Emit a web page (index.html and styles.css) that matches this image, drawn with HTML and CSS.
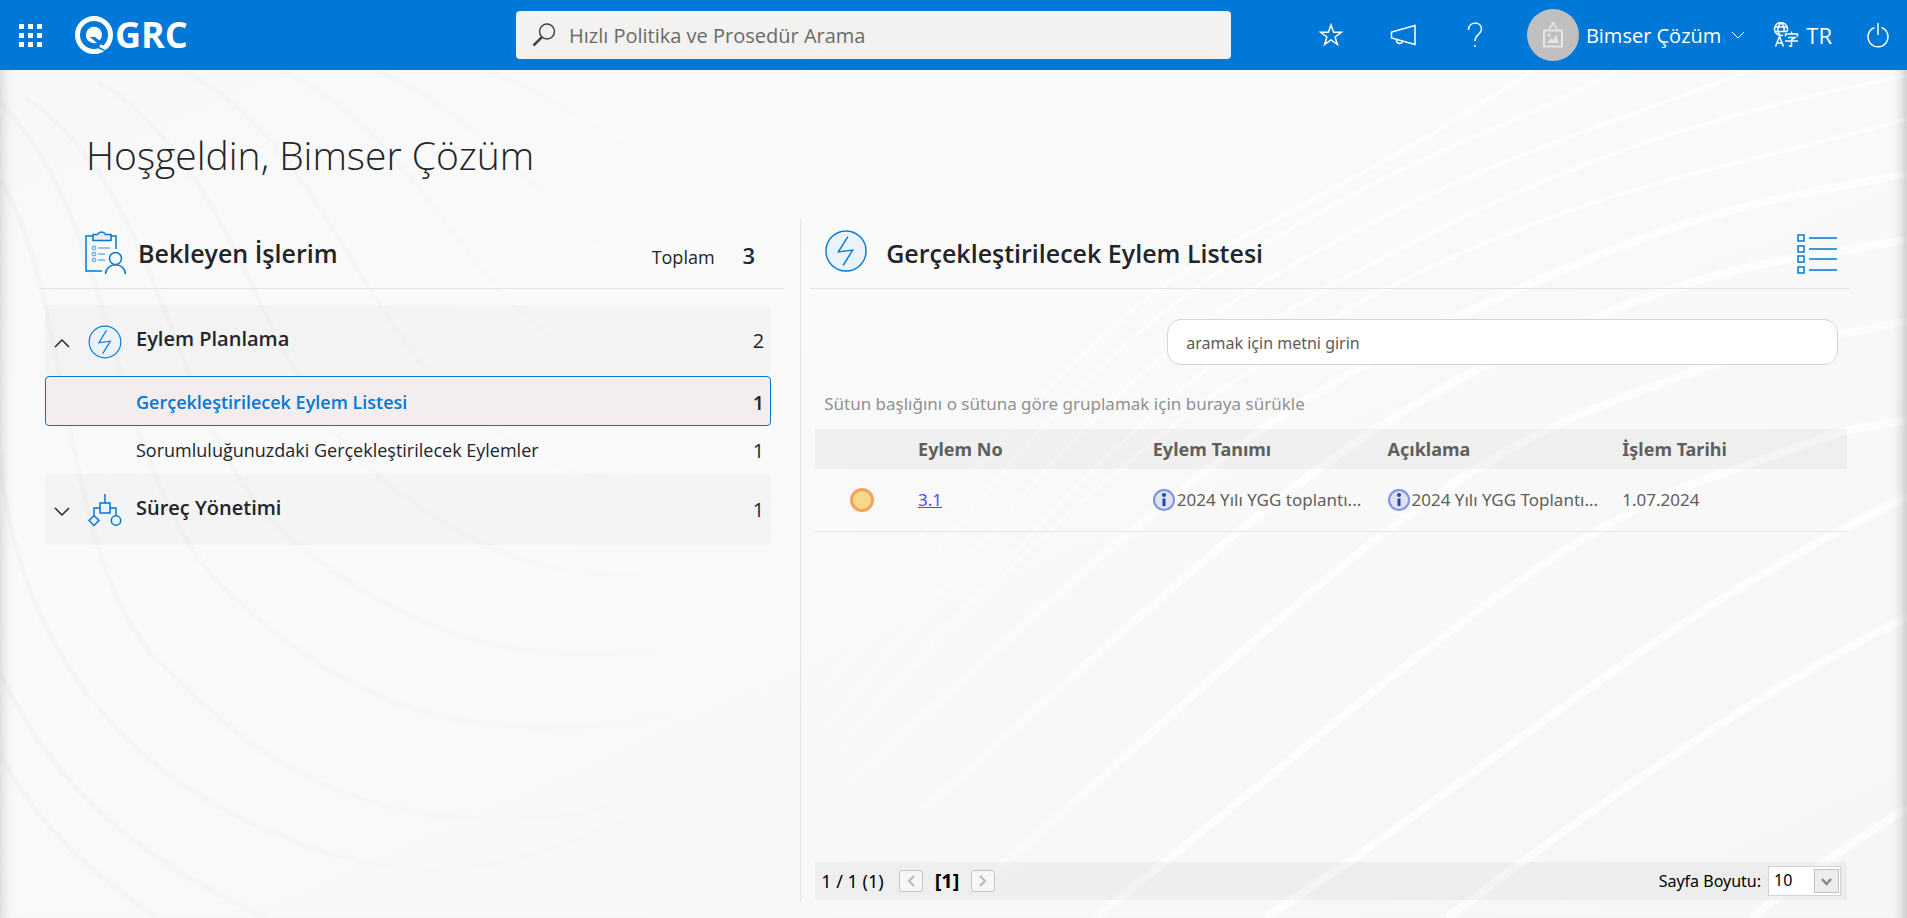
FILE: index.html
```html
<!DOCTYPE html>
<html lang="tr">
<head>
<meta charset="utf-8">
<title>QGRC</title>
<link rel="stylesheet" href="styles.css">
</head>
<body>
<svg class="backdrop" viewBox="0 0 1568 1550" preserveAspectRatio="none" aria-hidden="true">
  <defs>
    <linearGradient id="shade" x1="0" y1="0" x2="1" y2="1">
      <stop offset="0" stop-color="#f8f8f8"/><stop offset=".3" stop-color="#fafafa"/><stop offset="1" stop-color="#f6f6f6"/>
    </linearGradient>
    <linearGradient id="dark" gradientUnits="userSpaceOnUse" x1="0" y1="0" x2="600" y2="0">
      <stop offset="0" stop-color="#000" stop-opacity=".02"/><stop offset=".5" stop-color="#000" stop-opacity=".012"/><stop offset="1" stop-color="#000" stop-opacity="0"/>
    </linearGradient>
    <linearGradient id="light" gradientUnits="userSpaceOnUse" x1="640" y1="0" x2="1000" y2="0">
      <stop offset="0" stop-color="#fff" stop-opacity="0"/><stop offset="1" stop-color="#fff" stop-opacity=".75"/>
    </linearGradient>
  </defs>
  <rect width="1568" height="1550" fill="url(#shade)"/>
  <g class="wave-dark">
    <path d="M0 200C60 420 50 900 130 1080S280 1370 420 1370S600 1200 700 1000"/>
    <path d="M0 60C100 280 90 760 190 960S360 1210 480 1200S640 1050 720 900"/>
    <path d="M20 50C140 220 140 680 240 860S430 1090 540 1060S650 950 740 800"/>
    <path d="M80 20C200 180 210 560 310 740S480 950 600 900S680 800 760 700"/>
    <path d="M150 0C270 140 290 460 390 630S560 800 760 600"/>
    <path d="M230 0C340 110 370 360 460 500S620 660 760 500"/>
    <path d="M310 0C410 100 450 270 540 390S680 500 780 420"/>
    <path d="M400 0C490 80 540 200 620 280S740 340 800 300"/>
    <path d="M0 700C10 1000 80 1250 210 1380S420 1480 560 1320"/>
    <path d="M0 1100C40 1300 110 1440 220 1550"/>
    <path d="M0 1250C30 1380 80 1480 130 1550"/>
  </g>
  <g class="wave-light">
    <path d="M640 1150C760 880 860 500 1010 320S1180 120 1260 0"/>
    <path d="M640 1230C780 880 870 540 1030 330S1230 120 1330 0"/>
    <path d="M660 1250C800 900 900 560 1060 360S1300 120 1440 0"/>
    <path d="M680 1270C820 920 930 600 1090 400S1380 90 1568 10"/>
    <path d="M720 1150C860 840 980 580 1140 400S1400 190 1568 90"/>
  </g>
  <g class="wave-light wave-wide">
    <path d="M700 1300C900 900 1010 650 1190 460S1440 240 1568 190"/>
    <path d="M760 1350C960 960 1080 680 1250 510S1470 350 1568 310"/>
    <path d="M800 1500C1020 1080 1150 760 1310 620S1480 500 1568 460"/>
    <path d="M900 1550C1100 1200 1260 860 1400 750S1510 660 1568 640"/>
    <path d="M1040 1550C1240 1260 1360 1000 1568 780"/>
    <path d="M1190 1550C1320 1330 1450 1130 1568 1000"/>
    <path d="M1440 1550C1490 1460 1530 1400 1568 1350"/>
  </g>
</svg>

<header class="topbar">
  <button class="icon-button apps" aria-label="Uygulamalar">
    <svg width="23" height="23" viewBox="0 0 23 23" fill="#fff"><path d="M0 0h5v5H0zM9 0h5v5H9zM18 0h5v5h-5zM0 9h5v5H0zM9 9h5v5H9zM18 9h5v5h-5zM0 18h5v5H0zM9 18h5v5H9zM18 18h5v5h-5z"/></svg>
  </button>
  <a class="logo" href="#" aria-label="QGRC">
    <svg width="38" height="38" viewBox="0 0 38 38"><circle cx="19" cy="19" r="16.500" fill="none" stroke="#fff" stroke-width="5"/><path d="M24.500 24.500l-4.500-3.500h-5l7 6C15 28 11 24 11 19a8 8 0 1 1 13.500 5.500z" fill="#fff"/><path d="M24 31.500l9 3.500" stroke="#0078d7" stroke-width="2.500"/><path d="M25 29.500l6 3.500" stroke="#fff" stroke-width="3"/></svg>
    <span>GRC</span>
  </a>
  <label class="quick-search">
    <svg width="24" height="24" viewBox="0 0 24 24" fill="none" stroke="#444" stroke-width="1.500"><circle cx="15" cy="8.500" r="7.500"/><path d="M10 14L1.500 22.500" stroke-width="2.500"/></svg>
    <input type="search" placeholder="Hızlı Politika ve Prosedür Arama" aria-label="Hızlı Politika ve Prosedür Arama">
  </label>
  <nav class="tools">
    <button class="icon-button" aria-label="Favoriler"><svg width="24" height="24" viewBox="0 0 24 24" fill="none" stroke="#fff" stroke-width="1.500"><path d="M12 2l2.600 7.300h7.700l-6.200 4.700 2.300 7.500L12 17l-6.400 4.500L7.900 14 1.700 9.300h7.700z"/></svg></button>
    <button class="icon-button" aria-label="Duyurular"><svg width="26" height="24" viewBox="0 0 26 24" fill="none" stroke="#fff" stroke-width="1.500"><path d="M25 2.500v19L1.500 15V9zM6.500 16.500c-.5 5 6 5 6 1.500"/></svg></button>
    <button class="icon-button" aria-label="Yardım"><svg width="24" height="26" viewBox="0 0 24 26" fill="none" stroke="#fff" stroke-width="1.500"><path d="M5.500 8c0-9 13-9 13-1 0 6-6.500 5-6.500 12"/><path d="M12 23v2"/></svg></button>
  </nav>
  <button class="profile">
    <span class="avatar"><svg width="22" height="28" viewBox="0 0 22 28" fill="none" stroke="#e6e6e6" stroke-width="2"><path d="M2 9.500h18v16H2z"/><path d="M7 8l3-4M15 8l-3-4" stroke-width="1.500"/><circle cx="11" cy="2.500" r="1.800" fill="#e6e6e6" stroke="none"/><path d="M5 22l4-5 2 2 3-5 3 8z" fill="#e6e6e6" stroke="none"/><circle cx="7" cy="14" r="1.500" fill="#e6e6e6" stroke="none"/></svg></span>
    <span>Bimser Çözüm</span>
    <svg width="14" height="8" viewBox="0 0 14 8" fill="none" stroke="#fff"><path d="M1 1l6 6 6-6"/></svg>
  </button>
  <button class="language">
    <svg width="26" height="26" viewBox="0 0 26 26" fill="none" stroke="#fff" stroke-width="1.500"><path d="M10 13.200A6.500 6.500 0 1 1 14 9.500M7 13C4 10 4 4 8 1c3 2 3.500 5 3 8M2 5h12M2 9.500h12"/><path d="M2.500 24.500l4-10 4 10M4 21h5"/><path d="M12.500 14.500V12h12v2.500M18.500 9.500V12M15 15.500h7L18.500 18v6H16M12 19h13"/></svg>
    <span>TR</span>
  </button>
  <button class="icon-button" aria-label="Çıkış"><svg width="22" height="25" viewBox="0 0 22 25" fill="none" stroke="#fff" stroke-width="1.500"><path d="M11 0v12M7.500 4.500a10 10 0 1 0 7 0"/></svg></button>
</header>

<main class="page">
  <h1 class="welcome">Hoşgeldin, Bimser Çözüm</h1>
  <div class="columns">
    <section class="jobs">
      <div class="panel-head">
        <svg width="42" height="46" viewBox="0 0 42 46" fill="none" stroke="#0078d7" stroke-width="1.500"><path d="M17 42H1V7h7M24 7h7v13"/><path d="M8 11.500v-6h4.500a4.500 4.500 0 0 1 8 0H26v6z" fill="#efeaec"/><g stroke="#72b2e8"><circle cx="9" cy="19" r="1.700"/><circle cx="9" cy="25" r="1.700"/><circle cx="9" cy="31" r="1.700"/><path d="M13 19h12M13 25h7M13 31h7"/></g><circle cx="30.500" cy="29.500" r="6"/><path d="M20.500 45c1-12.500 19-12.500 20 0"/></svg>
        <h2>Bekleyen İşlerim</h2>
        <span class="total">Toplam</span><strong class="total-count">3</strong>
      </div>
      <div class="job-list">
        <button class="group" aria-expanded="true">
          <svg class="chevron" width="16" height="10" viewBox="0 0 16 10"><path d="M1 9l7-7 7 7"/></svg>
          <svg class="group-icon" width="34" height="34" viewBox="0 0 44 44"><circle cx="22" cy="22" r="20.500"/><path d="M24 7L14 23l15-2L19 37"/></svg>
          <span class="label">Eylem Planlama</span><span class="count">2</span>
        </button>
        <a class="job selected" href="#"><span class="label">Gerçekleştirilecek Eylem Listesi</span><span class="count">1</span></a>
        <a class="job" href="#"><span class="label">Sorumluluğunuzdaki Gerçekleştirilecek Eylemler</span><span class="count">1</span></a>
        <button class="group" aria-expanded="false">
          <svg class="chevron" width="16" height="10" viewBox="0 0 16 10"><path d="M1 1l7 7 7-7"/></svg>
          <svg class="group-icon flow" width="34" height="34" viewBox="0 0 34 34"><path d="M17 0v9M12 14H6v7M22 14h6v7" fill="none"/><path d="M12 9h10v10H12zM6 21.500l5 5-5 5-5-5z"/><circle cx="28" cy="26.500" r="4.700"/></svg>
          <span class="label">Süreç Yönetimi</span><span class="count">1</span>
        </button>
      </div>
    </section>

    <section class="detail">
      <div class="panel-head">
        <svg class="bolt" width="42" height="42" viewBox="0 0 44 44"><circle cx="22" cy="22" r="21"/><path d="M24 7L14 23l15-2L19 37"/></svg>
        <h2>Gerçekleştirilecek Eylem Listesi</h2>
        <button class="icon-button list-toggle" aria-label="Liste"><svg width="40" height="40" viewBox="0 0 40 40"><g fill="#fff" stroke="#0078d7" stroke-width="1.500"><path d="M1 1h6v6H1zM1 12h6v6H1zM1 22h6v6H1zM1 33h6v6H1z"/><path d="M12 4h28M12 15h28M12 25h28M12 36h28"/></g></svg></button>
      </div>
      <div class="detail-body">
        <input class="filter" type="text" placeholder="aramak için metni girin" aria-label="aramak için metni girin">
        <p class="group-hint">Sütun başlığını o sütuna göre gruplamak için buraya sürükle</p>
        <table class="grid">
          <colgroup><col class="col-status"><col><col><col><col></colgroup>
          <thead><tr><th></th><th>Eylem No</th><th>Eylem Tanımı</th><th>Açıklama</th><th>İşlem Tarihi</th></tr></thead>
          <tbody><tr>
            <td><span class="status"></span></td>
            <td><a href="#">3.1</a></td>
            <td><span class="info-cell"><svg width="22" height="22" viewBox="0 0 22 22"><circle cx="11" cy="11" r="10" fill="#dfe3ee" stroke="#7d90e8" stroke-width="2"/><circle cx="11" cy="6" r="2" fill="#2244b8"/><path d="M9.500 9.500h3V17h-3z" fill="#2244b8"/></svg><span>2024 Yılı YGG toplantı...</span></span></td>
            <td><span class="info-cell"><svg width="22" height="22" viewBox="0 0 22 22"><circle cx="11" cy="11" r="10" fill="#dfe3ee" stroke="#7d90e8" stroke-width="2"/><circle cx="11" cy="6" r="2" fill="#2244b8"/><path d="M9.500 9.500h3V17h-3z" fill="#2244b8"/></svg><span>2024 Yılı YGG Toplantı...</span></span></td>
            <td>1.07.2024</td>
          </tr></tbody>
        </table>
        <div class="pager">
          <span>1 / 1 (1)</span>
          <button class="page-step" aria-label="Önceki" disabled><svg width="8" height="12" viewBox="0 0 8 12"><path d="M7 1L2 6l5 5"/></svg></button>
          <strong>[1]</strong>
          <button class="page-step" aria-label="Sonraki" disabled><svg width="8" height="12" viewBox="0 0 8 12"><path d="M1 1l5 5-5 5"/></svg></button>
          <label class="page-size" for="page-size">Sayfa Boyutu:</label>
          <span class="select-box"><select id="page-size"><option>10</option><option>20</option></select><svg width="25" height="24" viewBox="0 0 25 24" aria-hidden="true"><rect x=".5" y=".5" width="24" height="23" fill="#ededed" stroke="#c2c2c2"/><path d="M8 10l4.500 5L17 10" fill="none" stroke="#888" stroke-width="2.500"/></svg></span>
        </div>
      </div>
    </section>
  </div>
</main>
</body>
</html>
```
FILE: styles.css
```css
* { box-sizing: border-box; }

body {
  margin: 0;
  min-height: 100vh;
  display: flex;
  flex-direction: column;
  font-family: "Open Sans", "Noto Sans", sans-serif;
  font-size: 18px;
  color: #212529;
  background: #f9f9f9;
}

button, input, select { font: inherit; color: inherit; }
button { border: 0; background: none; padding: 0; cursor: pointer; }
svg { display: block; flex: none; }

.backdrop {
  position: absolute;
  top: 70px;
  left: 0;
  width: 100%;
  height: calc(100% - 70px);
  z-index: -1;
  fill: none;
}
.backdrop path { vector-effect: non-scaling-stroke; }
.wave-dark { stroke: url(#dark); stroke-width: 5; }
.wave-light { stroke: url(#light); stroke-width: 4; }
.wave-wide { stroke-width: 8; }

.topbar {
  display: flex;
  align-items: center;
  height: 70px;
  padding: 0 18px;
  background: #0078d7;
  color: #fff;
  font-size: 20px;
}
.apps { padding-left: 1px; }
.logo {
  display: flex;
  align-items: center;
  gap: 2px;
  width: 116px;
  margin-left: 33px;
  color: #fff;
  font-size: 36px;
  font-weight: 700;
  line-height: 40px;
  text-decoration: none;
}
.quick-search {
  display: flex;
  align-items: center;
  gap: 13px;
  width: 38.2%;
  height: 48px;
  margin-left: 325px;
  padding: 0 16px;
  border-radius: 4px;
  background: #f3f2f1;
}
.quick-search input {
  flex: 1;
  min-width: 0;
  border: 0;
  padding: 0;
  outline: 0;
  background: none;
}
.quick-search input::placeholder { color: #6a6a6a; opacity: 1; }
.tools { display: flex; gap: 47px; margin-left: auto; }
.profile, .language { display: flex; align-items: center; }
.profile { gap: 7px; margin-left: 40px; }
.avatar {
  display: grid;
  place-items: center;
  width: 52px;
  height: 52px;
  border-radius: 50%;
  background: #bfbfbf;
}
.profile > svg { margin-left: 3px; }
.language { gap: 7px; margin: 0 35px 0 28px; font-size: 22px; }

.page {
  flex: 1;
  display: flex;
  flex-direction: column;
  padding: 0 57px 16px 40px;
  box-shadow: inset 16px 0 16px -16px #0003, inset -16px 0 16px -16px #0005;
}
.welcome {
  margin: 56px 0 35px 46px;
  font-size: 39px;
  line-height: 58px;
  font-weight: 300;
}
.columns {
  flex: 1;
  display: grid;
  grid-template-columns: 42fr 58fr;
}
.jobs { padding-right: 16px; }
.detail {
  display: flex;
  flex-direction: column;
  padding-left: 10px;
  border-left: 1px solid #e1e1e1;
}
.panel-head {
  display: flex;
  align-items: flex-start;
  height: 70px;
  padding: 11px 13px 0 14px;
  border-bottom: 1px solid #e4e4e4;
}
.jobs .panel-head { padding: 10px 29px 0 45px; }
.panel-head h2 {
  margin: 7px auto 0 11px;
  font-size: 25px;
  line-height: 34px;
  font-weight: 600;
}
.detail .panel-head h2 { margin: 6px auto 0 19px; }
.total { margin: 14px 28px 0 0; line-height: 28px; }
.total-count { margin-top: 11px; font-size: 22px; line-height: 30px; font-weight: 600; }
.bolt, .group-icon { fill: #eaf2fb; stroke: #0078d7; stroke-width: 1.500; }
.bolt path { fill: none; }
.list-toggle { margin-top: 4px; }

.job-list {
  display: flex;
  flex-direction: column;
  margin: 16px 13px 0 5px;
}
.group, .job {
  display: flex;
  align-items: center;
  padding: 0 7px 0 9px;
  text-align: left;
}
.group {
  height: 71px;
  border-radius: 4px;
  background: rgba(0, 0, 0, .025);
}
.chevron { fill: none; stroke: #212529; stroke-width: 1.500; margin-top: 4px; }
.group-icon { margin: 3px 14px 0 18px; }
.group .label { flex: 1; margin-bottom: 5px; font-size: 20px; font-weight: 600; }
.job {
  height: 48px;
  padding-left: 91px;
  color: inherit;
  text-decoration: none;
}
.job .label { flex: 1; }
.selected {
  height: 50px;
  padding: 2px 6px 0 90px;
  border: 1px solid #0078d7;
  border-radius: 4px;
  background: #f3edef;
  font-weight: 600;
}
.selected .label { color: #0078d7; }
.count { font-size: 20px; }

.detail-body {
  flex: 1;
  display: flex;
  flex-direction: column;
  padding: 30px 3px 2px 4px;
  font-family: "Noto Sans", "Open Sans", sans-serif;
  font-size: 17px;
}
.filter {
  align-self: flex-end;
  width: 65%;
  height: 46px;
  margin-right: 9px;
  padding: 2px 18px 0;
  border: 1px solid #d5d5d5;
  border-radius: 14px;
  outline: 0;
  background: #fff;
  font-size: 16px;
}
.filter::placeholder { color: #5b5b5b; opacity: 1; }
.group-hint { margin: 27px 0 13px 9px; line-height: 24px; color: #909090; }
.grid {
  width: 100%;
  border-collapse: collapse;
  table-layout: fixed;
  color: #5f5f5b;
}
.col-status { width: 9%; }
.grid th {
  height: 40px;
  padding: 0 10px;
  background: rgba(0, 0, 0, .035);
  font-size: 18px;
  font-weight: 700;
  text-align: left;
}
.grid td {
  height: 62px;
  padding: 0 10px;
  border-bottom: 1px solid #e6e6e6;
  white-space: nowrap;
}
.grid a { color: #4a4aff; }
.status {
  display: block;
  width: 24px;
  height: 24px;
  margin-left: 25px;
  border: 3px solid #f2a45c;
  border-radius: 50%;
  background: #f8d98b;
}
.info-cell { display: flex; align-items: center; gap: 2px; }
.pager {
  display: flex;
  align-items: center;
  height: 38px;
  margin-top: auto;
  padding: 0 6px;
  background: rgba(0, 0, 0, .035);
  color: #000;
  font-size: 18px;
}
.pager strong { font-size: 20px; line-height: 24px; }
.page-step {
  display: grid;
  place-items: center;
  width: 24px;
  height: 22px;
  margin: 0 12px 0 15px;
  border: 1px solid #c4c4c4;
  border-radius: 3px;
  background: #f6f6f6;
}
.pager strong + .page-step { margin-left: 12px; }
.page-step svg { fill: none; stroke: #b8b8b8; stroke-width: 2; }
.page-size { margin: 0 7px 0 auto; font-size: 16px; }
.select-box {
  display: flex;
  align-items: center;
  width: 73px;
  height: 30px;
  padding-right: 1px;
  border: 1px solid #d3d3d3;
  background: #fff;
}
.select-box select {
  flex: 1;
  min-width: 0;
  appearance: none;
  border: 0;
  padding: 0 0 2px 5px;
  outline: 0;
  background: none;
  font-size: 16px;
}
```
